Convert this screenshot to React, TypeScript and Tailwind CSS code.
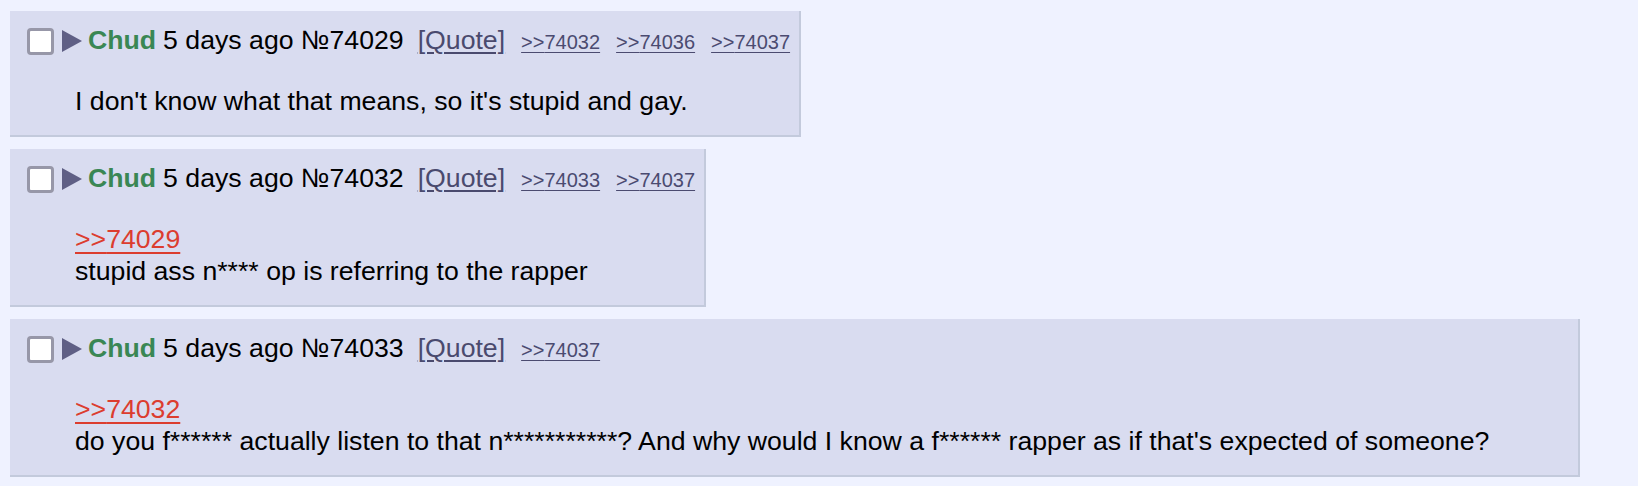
type Post = {
  id: number;
  date: string;
  backlinks: number[];
  quote?: number;
  lines: string[];
};

const posts: Post[] = [
  {
    id: 74029,
    date: "5 days ago",
    backlinks: [74032, 74036, 74037],
    lines: ["I don't know what that means, so it's stupid and gay."],
  },
  {
    id: 74032,
    date: "5 days ago",
    backlinks: [74033, 74037],
    quote: 74029,
    lines: ["stupid ass n**** op is referring to the rapper"],
  },
  {
    id: 74033,
    date: "5 days ago",
    backlinks: [74037],
    quote: 74032,
    lines: [
      "do you f****** actually listen to that n***********? And why would I know a f****** rapper as if that's expected of someone?",
    ],
  },
];

function Checkbox() {
  return (
    <div className="h-[27px] w-[27px] shrink-0 rounded-[4px] border-[3px] border-[#9797a8] bg-white" />
  );
}

function MenuArrow() {
  return (
    <svg width="20" height="22" viewBox="0 0 20 22" className="ml-[8px] shrink-0">
      <polygon points="0,0 20,11 0,22" fill="#5f5f85" />
    </svg>
  );
}

function Reply({ post }: { post: Post }) {
  return (
    <div className="w-fit max-w-full border-b-2 border-r-2 border-[#c3cadc] bg-[#d9dcf0] pb-[18px] pl-[17px] pr-[9px] pt-[14px]">
      <div className="flex h-[32px] items-center whitespace-nowrap">
        <Checkbox />
        <MenuArrow />
        <div className="ml-[6px] flex items-baseline">
          <span className="font-bold text-[#3a8754]">Chud</span>
          <span className="ml-[7px] text-black">
            {post.date} №{post.id}
          </span>
          <a className="ml-[14px] text-[#4a4a6e] underline decoration-[1.5px] underline-offset-[3px]">
            [Quote]
          </a>
          {post.backlinks.map((b) => (
            <a
              key={b}
              className="ml-[16px] text-[20px] text-[#4b4b70] underline decoration-1 underline-offset-[3px]"
            >
              &gt;&gt;{b}
            </a>
          ))}
        </div>
      </div>
      <div className="ml-[48px] mr-[80px] mt-[28px] text-black">
        {post.quote && (
          <div>
            <a className="text-[#dc3d2f] underline decoration-2 underline-offset-[4px]">
              &gt;&gt;{post.quote}
            </a>
          </div>
        )}
        {post.lines.map((l, i) => (
          <div key={i}>{l}</div>
        ))}
      </div>
    </div>
  );
}

export default function App() {
  return (
    <div
      className="flex min-h-[486px] flex-col gap-[12px] bg-[#eff2ff] pl-[10px] pt-[11px] text-[26.67px] leading-[32px]"
      style={{ fontFamily: '"Liberation Sans", Arial, sans-serif' }}
    >
      {posts.map((p) => (
        <Reply key={p.id} post={p} />
      ))}
    </div>
  );
}
